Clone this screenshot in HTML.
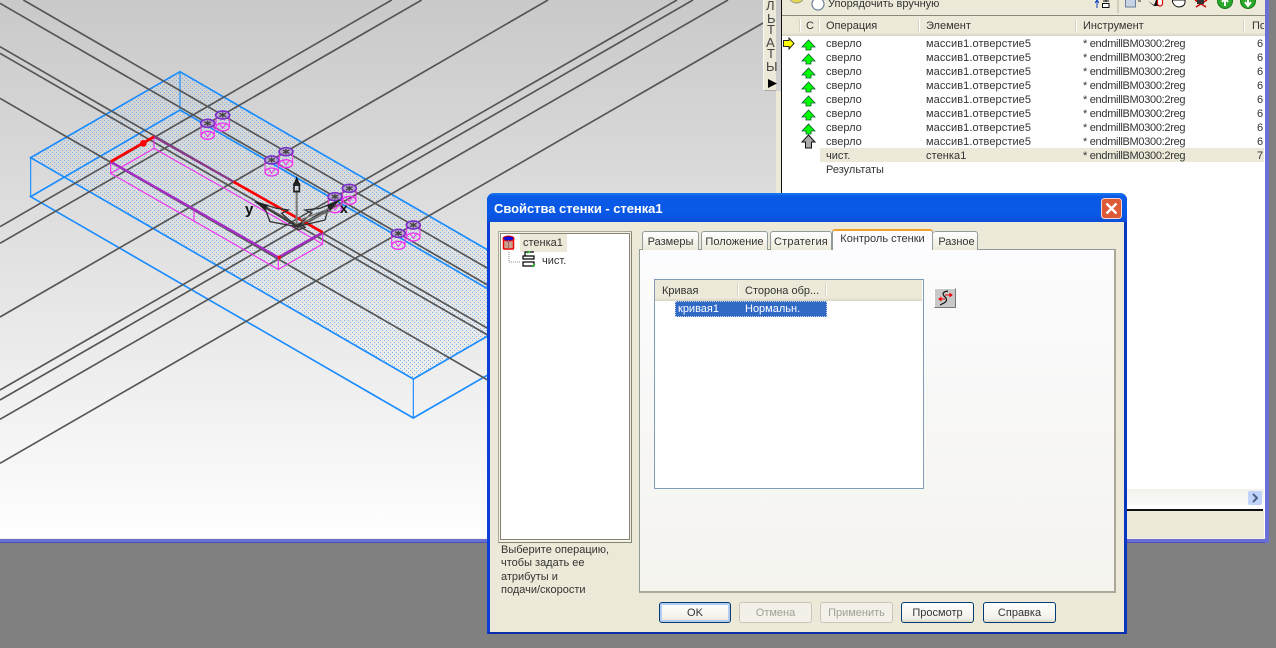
<!DOCTYPE html>
<html><head><meta charset="utf-8"><style>
html,body{margin:0;padding:0;width:1276px;height:648px;overflow:hidden;background:#808080}
body{position:relative;font-family:"Liberation Sans","Noto Sans CJK SC",sans-serif;font-size:11px;color:#333}
.a{position:absolute;box-sizing:border-box}
.t{position:absolute;white-space:nowrap;line-height:14px;height:14px}
.e{letter-spacing:.08px}
.m{letter-spacing:-.3px}
.sep{position:absolute;width:2px;background:#d8d4c4;border-right:1px solid #fff;box-sizing:border-box}
.tab{position:absolute;box-sizing:border-box;top:231px;height:19px;border:1px solid #919b9c;border-bottom:none;border-radius:3px 3px 0 0;background:linear-gradient(#fff,#ece9d8);line-height:20px;text-align:center;color:#333}
.btn{position:absolute;box-sizing:border-box;top:602px;height:21px;border:1px solid #003c74;border-radius:3px;background:linear-gradient(#fff,#f2f1ea 80%,#dcd8c8);text-align:center;line-height:20px;color:#333}
.dis{border-color:#c9c7ba;color:#a1a192;background:#f2f0e8}
</style></head><body>

<div class="a" style="left:0;top:0;width:781px;height:539px;background:linear-gradient(#c9c9c9,#e6e6e6 55%,#fff)"></div>
<svg class="a" style="left:0;top:0" width="776" height="539" viewBox="0 0 776 539">
<defs>
<pattern id="dots" patternUnits="userSpaceOnUse" width="4" height="4"><rect x="0" y="0" width="1" height="1" fill="#7ab2ea" shape-rendering="crispEdges"/><rect x="2" y="2" width="1" height="1" fill="#7ab2ea" shape-rendering="crispEdges"/></pattern>
<g id="hole">
<ellipse cx="0" cy="36" rx="20" ry="12" fill="none" stroke="#f030f0" stroke-width="4"/>
<path d="M-20 4V34M20 4V34M-10 26L0 40L10 26" fill="none" stroke="#f030f0" stroke-width="3"/>
<ellipse cx="0" cy="0" rx="21" ry="12" fill="#b9a5d0" stroke="#7a30c8" stroke-width="5"/>
<path d="M-10 -5L10 5M10 -5L-10 5M0 -8V8" stroke="#444" stroke-width="4"/>
</g>
</defs>
<polygon points="180,71.700 30.700,157.700 413.300,379 562,293" fill="url(#dots)"/>
<g transform="scale(.33333)">
<g fill="none" stroke="#1a8cff" stroke-width="5">
<path d="M540 215L92 473L1240 1137L1686 879Z"/>
<path d="M540 330L92 590L1240 1254L1686 996M540 330L1686 996"/>
<path d="M92 473V590M540 215V330M1240 1137V1254" stroke-width="3.500"/>
</g>
<g fill="none" stroke="#555" stroke-width="5">
<path d="M70 0L1700 942M0 10L1700 992M0 140L1700 1122M0 160L1700 1142M0 295L1700 1277"/>
<path d="M1175 0L0 680M1265 0L0 730M1644 0L0 951"/>
<path d="M2031 0L0 1170M2079 0L0 1200M2184 0L0 1258M2289 69L0 1390"/>
</g>
<g fill="none" stroke="#f030f0" stroke-width="3.500">
<path d="M332 485V520L835 808V772M835 808L968 732V697M462 410V445L332 520M462 445L968 732M582 630V665"/>
</g>
<path d="M332 485L835 772L968 697" fill="none" stroke="#a52cc4" stroke-width="7"/>
<path d="M462 410L700 545" fill="none" stroke="#8a3a8a" stroke-width="7"/>
<path d="M332 485L462 410M700 545L968 697" fill="none" stroke="#f00" stroke-width="8"/>
<circle cx="430" cy="430" r="10" fill="#f00"/><circle cx="838" cy="772" r="5" fill="#f00"/>
<use href="#hole" x="668" y="345"/><use href="#hole" x="623" y="370"/>
<use href="#hole" x="858" y="455"/><use href="#hole" x="815" y="480"/>
<use href="#hole" x="1048" y="565"/><use href="#hole" x="1005" y="590"/>
<use href="#hole" x="1240" y="675"/><use href="#hole" x="1195" y="700"/>
<path d="M890 680V570" stroke="#777" stroke-width="6" fill="none"/>
<path d="M890 533L881 556H899Z" fill="#222" stroke="#111" stroke-width="3"/>
<path d="M882 552H898V575H882Z" fill="none" stroke="#222" stroke-width="5"/>
<g fill="none" stroke="#333" stroke-width="4">
<path d="M765 605L830 625L865 630L845 640L890 680L810 665L795 625Z"/>
<path d="M1020 600L960 625L915 630L935 640L890 680L975 660L985 625Z"/>
<path d="M790 620L890 680M995 620L890 680M880 680L900 670L915 682L895 690Z"/>
<path d="M900 660L990 625M905 668L995 632" stroke="#777"/>
</g>
<path d="M765 605L805 615L795 632Z M1020 600L980 615L990 632Z" fill="#222"/>
</g>
<text x="245" y="214" font-family="Liberation Sans" font-size="15" font-weight="bold" fill="#111">y</text>
<text x="340" y="213" font-family="Liberation Sans" font-size="14" font-weight="bold" fill="#111">x</text>
</svg>

<!-- palette -->
<div class="a" style="left:763px;top:0;width:13px;height:91px;background:#ece9d8;border-bottom:1px solid #aaa;border-left:1px solid #f8f7f0"></div>
<div class="t" style="left:766px;top:-1px;font-size:13px;color:#444">Л</div>
<div class="t" style="left:767px;top:12px;font-size:13px;color:#444">Ь</div>
<div class="t" style="left:767px;top:23px;font-size:13px;color:#444">Т</div>
<div class="t" style="left:766px;top:36px;font-size:13px;color:#444">А</div>
<div class="t" style="left:767px;top:47px;font-size:13px;color:#444">Т</div>
<div class="t" style="left:766px;top:60px;font-size:13px;color:#444">Ы</div>
<svg class="a" style="left:768px;top:79px" width="9" height="9"><path d="M0 0L9 4.500L0 9Z" fill="#000"/></svg>
<div class="a" style="left:776px;top:91px;width:5px;height:448px;background:#ece9d8"></div>
<div class="a" style="left:781px;top:0;width:1px;height:539px;background:#111"></div>

<!-- right panel -->
<div class="a" style="left:782px;top:0;width:483px;height:538px;background:#fff"></div>
<div class="a" style="left:782px;top:0;width:483px;height:15px;background:#ece9d8"></div>
<div class="a" style="left:782px;top:15px;width:483px;height:1px;background:#8a8878"></div>
<div class="a" style="left:782px;top:16px;width:483px;height:20px;background:linear-gradient(#ece9d8 85%,#d6d2c0)"></div>
<svg class="a" style="left:782px;top:0" width="483" height="16">
<ellipse cx="14.500" cy="-2" rx="6.500" ry="5" fill="#e8d850" stroke="#998"/>
<circle cx="36" cy="4" r="6" fill="#fff" stroke="#6a7f9a" stroke-width="1.200"/>
<path d="M315 8V1M313 3L315 0L317 3" stroke="#0a3ec0" fill="none"/>
<path d="M321 1H327M324 -1V2" stroke="#111"/><rect x="320.500" y="3.500" width="6.500" height="4" fill="#fff" stroke="#111"/>
<path d="M336 0V13" stroke="#b8b4a4"/>
<rect x="343.500" y="-1" width="10" height="8" fill="#c8d4e4" stroke="#6a7f9a"/><path d="M356 1H359" stroke="#333"/>
<path d="M366 1L372 5L374 0H376V6H372Z" fill="#111"/><rect x="375.500" y="-2" width="5" height="8" rx="2.500" fill="#fff" stroke="#d00" stroke-width="1.200"/>
<path d="M390.500 0H403V3Q402 7 396 7Q392 6 390.500 2Z" fill="#fff" stroke="#111"/>
<path d="M413 0L424 7M425 0L414 7" stroke="#c00" stroke-width="1.500"/><rect x="415" y="0" width="7" height="4" fill="#333"/>
<circle cx="443" cy="1" r="7.500" fill="#2aa82a" stroke="#1a7a1a"/><path d="M443 6V-1M440 2L443 -2L446 2" stroke="#fff" stroke-width="2" fill="none"/>
<circle cx="466" cy="1" r="7.500" fill="#2aa82a" stroke="#1a7a1a"/><path d="M466 -2V5M463 2L466 6L469 2" stroke="#fff" stroke-width="2" fill="none"/>
</svg>
<div class="t" style="left:828px;top:-3px">Упорядочить вручную</div>
<div class="sep" style="left:799px;top:19px;height:13px"></div>
<div class="sep" style="left:818px;top:19px;height:13px"></div>
<div class="sep" style="left:918px;top:19px;height:13px"></div>
<div class="sep" style="left:1075px;top:19px;height:13px"></div>
<div class="sep" style="left:1243px;top:19px;height:13px"></div>
<div class="t" style="left:806px;top:19px">С</div>
<div class="t" style="left:826px;top:19px">Операция</div>
<div class="t" style="left:926px;top:19px">Элемент</div>
<div class="t" style="left:1083px;top:19px">Инструмент</div>
<div class="t" style="left:1252px;top:19px;width:12px;overflow:hidden">По</div>

<div class="a" style="left:820px;top:148px;width:444px;height:14px;background:#ece9d8"></div>
<svg class="a" style="left:782px;top:36px" width="40" height="116">
<path d="M1.500 4.500H7V2L12 7.500L7 13V10.500H1.500Z" fill="#ff0" stroke="#222"/>
<g fill="#0f0" stroke="#153" stroke-width=".8">
<path d="M26.500 4L20 11H24V14H29V11H33Z"/>
<path d="M26.500 18L20 25H24V28H29V25H33Z"/><path d="M26.500 32L20 39H24V42H29V39H33Z"/>
<path d="M26.500 46L20 53H24V56H29V53H33Z"/><path d="M26.500 60L20 67H24V70H29V67H33Z"/>
<path d="M26.500 74L20 81H24V84H29V81H33Z"/><path d="M26.500 88L20 95H24V98H29V95H33Z"/>
</g>
<path d="M26.500 99L20 106H23.500V112H29.500V106H33Z" fill="#aaa" stroke="#111"/>
</svg>
<div class="t" style="left:826px;top:37px">сверло</div><div class="t e" style="left:926px;top:37px">массив1.отверстие5</div><div class="t m" style="left:1083px;top:37px">* endmillBM0300:2reg</div><div class="t" style="left:1257px;top:37px">6</div>
<div class="t" style="left:826px;top:51px">сверло</div><div class="t e" style="left:926px;top:51px">массив1.отверстие5</div><div class="t m" style="left:1083px;top:51px">* endmillBM0300:2reg</div><div class="t" style="left:1257px;top:51px">6</div>
<div class="t" style="left:826px;top:65px">сверло</div><div class="t e" style="left:926px;top:65px">массив1.отверстие5</div><div class="t m" style="left:1083px;top:65px">* endmillBM0300:2reg</div><div class="t" style="left:1257px;top:65px">6</div>
<div class="t" style="left:826px;top:79px">сверло</div><div class="t e" style="left:926px;top:79px">массив1.отверстие5</div><div class="t m" style="left:1083px;top:79px">* endmillBM0300:2reg</div><div class="t" style="left:1257px;top:79px">6</div>
<div class="t" style="left:826px;top:93px">сверло</div><div class="t e" style="left:926px;top:93px">массив1.отверстие5</div><div class="t m" style="left:1083px;top:93px">* endmillBM0300:2reg</div><div class="t" style="left:1257px;top:93px">6</div>
<div class="t" style="left:826px;top:107px">сверло</div><div class="t e" style="left:926px;top:107px">массив1.отверстие5</div><div class="t m" style="left:1083px;top:107px">* endmillBM0300:2reg</div><div class="t" style="left:1257px;top:107px">6</div>
<div class="t" style="left:826px;top:121px">сверло</div><div class="t e" style="left:926px;top:121px">массив1.отверстие5</div><div class="t m" style="left:1083px;top:121px">* endmillBM0300:2reg</div><div class="t" style="left:1257px;top:121px">6</div>
<div class="t" style="left:826px;top:135px">сверло</div><div class="t e" style="left:926px;top:135px">массив1.отверстие5</div><div class="t m" style="left:1083px;top:135px">* endmillBM0300:2reg</div><div class="t" style="left:1257px;top:135px">6</div>
<div class="t" style="left:826px;top:149px">чист.</div><div class="t e" style="left:926px;top:149px">стенка1</div><div class="t m" style="left:1083px;top:149px">* endmillBM0300:2reg</div><div class="t" style="left:1257px;top:149px">7</div>
<div class="t" style="left:826px;top:163px">Результаты</div>

<div class="a" style="left:782px;top:489px;width:482px;height:16px;background:linear-gradient(#f2f1ec,#fafaf8)"></div>
<div class="a" style="left:1248px;top:491px;width:14px;height:14px;background:#c1d3fb;border-radius:2px"></div>
<svg class="a" style="left:1248px;top:491px" width="14" height="14"><path d="M5 3L9 7L5 11" fill="none" stroke="#4d6185" stroke-width="2"/></svg>
<div class="a" style="left:782px;top:505px;width:483px;height:4px;background:#fff"></div>
<div class="a" style="left:782px;top:509px;width:481px;height:2px;background:#111"></div>
<div class="a" style="left:782px;top:511px;width:482px;height:27px;background:#ece9d8"></div>

<!-- window frame -->
<div class="a" style="left:0;top:538px;width:1266px;height:1px;background:#f2efe4"></div>
<div class="a" style="left:0;top:539px;width:1269px;height:4px;background:#6a70d6;border-bottom:1px solid #4e4eb8"></div>
<div class="a" style="left:1265px;top:0;width:4px;height:543px;background:#6a70d6"></div>

<!-- dialog -->
<div class="a" style="left:487px;top:193px;width:640px;height:441px;background:#ece9d8;border:3px solid #0c3fd8;border-top:none;border-bottom:2px solid #0a2fa8;border-radius:7px 7px 0 0;border-right-color:#0a36c0"></div>
<div class="a" style="left:487px;top:193px;width:640px;height:29px;border-radius:7px 7px 0 0;background:linear-gradient(#1a7cf0 0,#0a5ae6 12%,#0a58e6 70%,#0b4fd8 100%)"></div>
<div class="t" style="left:494px;top:202px;font-size:13px;font-weight:bold;color:#fff;letter-spacing:-.05px">Свойства стенки - стенка1</div>
<svg class="a" style="left:1101px;top:198px" width="21" height="21">
<rect x=".5" y=".5" width="20" height="20" rx="3" fill="#dd5a36" stroke="#f3d9cf"/>
<path d="M5.500 5.500L15.500 15.500M15.500 5.500L5.500 15.500" stroke="#fff" stroke-width="2.400"/>
</svg>

<!-- tree -->
<div class="a" style="left:498px;top:231px;width:134px;height:312px;background:#f4f2e8;border:1px solid #aca899;border-right-color:#86836f;border-bottom-color:#86836f"></div>
<div class="a" style="left:500px;top:233px;width:130px;height:307px;background:#fff;border:1px solid #86836f"></div>
<div class="a" style="left:520px;top:234px;width:47px;height:18px;background:#ece9d8"></div>
<div class="t" style="left:523px;top:236px">стенка1</div>
<div class="t" style="left:542px;top:254px">чист.</div>
<svg class="a" style="left:501px;top:234px" width="40" height="36">
<rect x="2.500" y="4" width="10" height="11" rx="1" fill="#c8a090" stroke="#e00" stroke-width="1.500"/>
<ellipse cx="7.500" cy="4.500" rx="5.500" ry="2.500" fill="#1010d8" stroke="#e00"/>
<path d="M7.500 6V15" stroke="#a66"/>
<path d="M8 18V28H19" fill="none" stroke="#888" stroke-dasharray="1 1"/>
<path d="M22 22H33V25H22ZM22 28H33V32H22ZM24 22V18H33" fill="none" stroke="#000" stroke-width="1.200"/>
<path d="M26 19L29 18M31 33L34 30" stroke="#1c1" stroke-width="1.200"/>
</svg>
<div class="t" style="left:501px;top:543px">Выберите операцию,</div>
<div class="t" style="left:501px;top:556px">чтобы задать ее</div>
<div class="t" style="left:501px;top:570px">атрибуты и</div>
<div class="t" style="left:501px;top:583px">подачи/скорости</div>

<!-- tab panel -->
<div class="a" style="left:639px;top:249px;width:477px;height:344px;border:1px solid #919b9c;border-right:2px solid #aca899;border-bottom:2px solid #aca899;background:linear-gradient(#fcfcfe,#f4f3ee)"></div>
<div class="tab" style="left:642px;width:57px">Размеры</div>
<div class="tab" style="left:701px;width:67px">Положение</div>
<div class="tab" style="left:770px;width:62px;letter-spacing:.2px">Стратегия</div>
<div class="tab" style="left:933px;width:45px;border-left:none;padding-left:3px">Разное</div>
<div class="a" style="left:832px;top:229px;width:101px;height:21px;background:#fcfcfe;border:1px solid #919b9c;border-bottom:none;border-top:2px solid #f0a030;border-radius:3px 3px 0 0;text-align:center;line-height:16px;color:#333">Контроль стенки</div>

<div class="a" style="left:654px;top:279px;width:270px;height:210px;background:#fff;border:1px solid #7f9db9"></div>
<div class="a" style="left:655px;top:280px;width:267px;height:21px;background:linear-gradient(#ece9d8 85%,#d8d4c2)"></div>
<div class="sep" style="left:737px;top:283px;height:13px"></div>
<div class="sep" style="left:825px;top:283px;height:13px"></div>
<div class="t" style="left:662px;top:284px">Кривая</div>
<div class="t" style="left:745px;top:284px">Сторона обр...</div>
<div class="a" style="left:675px;top:301px;width:152px;height:16px;background:#316ac5;border:1px dotted #cfd8ea"></div>
<div class="t" style="left:678px;top:302px;color:#fff">кривая1</div>
<div class="t" style="left:745px;top:302px;color:#fff">Нормальн.</div>

<div class="a" style="left:934px;top:288px;width:22px;height:20px;background:#c8c8c8;border:1px solid;border-color:#fff #777 #777 #fff"></div>
<svg class="a" style="left:934px;top:288px" width="22" height="20">
<path d="M14 3Q7 4 10 8Q15 12 10 15L6 17" fill="none" stroke="#111" stroke-width="1.200"/>
<path d="M6 11H11M5 11L7 9.500V12.500ZM11 7H17M18 7L16 5.500V8.500Z" stroke="#e00" fill="#e00"/>
</svg>

<div class="btn" style="left:659px;width:72px;box-shadow:inset 0 0 0 2px #b4ccf0">OK</div>
<div class="btn dis" style="left:739px;width:73px">Отмена</div>
<div class="btn dis" style="left:820px;width:73px">Применить</div>
<div class="btn" style="left:901px;width:73px">Просмотр</div>
<div class="btn" style="left:983px;width:73px">Справка</div>
</body></html>
